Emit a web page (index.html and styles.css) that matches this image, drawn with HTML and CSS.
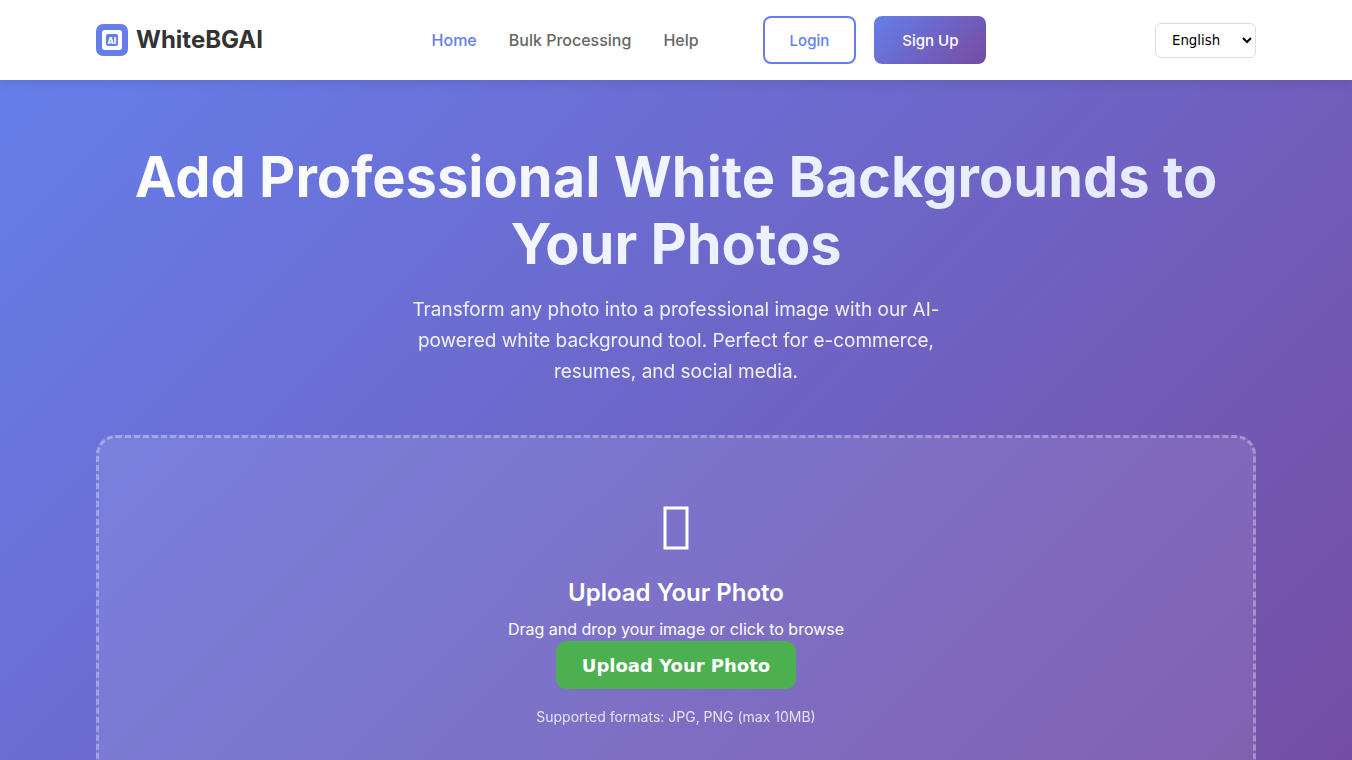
FILE: index.html
```html
<!DOCTYPE html>
<html lang="en">
<head>
  <meta charset="UTF-8">
  <meta name="viewport" content="width=device-width, initial-scale=1.0">
  <title>WhiteBGAI</title>
  <link rel="stylesheet" href="styles.css">
</head>
<body>
  <header class="header">
    <div class="container header-inner">
      <a href="#" class="logo">
        <svg class="logo-icon" width="32" height="32" viewBox="0 0 32 32" aria-hidden="true">
          <rect width="32" height="32" rx="7" fill="#667eea"/>
          <rect x="6" y="6" width="20" height="20" rx="3" fill="#fff"/>
          <rect x="10" y="10" width="12" height="12" rx="2" fill="#667eea"/>
          <text class="logo-mark" x="16" y="20" text-anchor="middle">AI</text>
        </svg>
        <span>WhiteBGAI</span>
      </a>
      <nav class="nav">
        <div class="nav-links">
          <a href="#" class="nav-link active">Home</a>
          <a href="#" class="nav-link">Bulk Processing</a>
          <a href="#" class="nav-link">Help</a>
        </div>
        <div class="nav-auth">
          <button type="button" class="btn btn-login">Login</button>
          <button type="button" class="btn btn-signup">Sign Up</button>
        </div>
      </nav>
      <select class="language" aria-label="Language">
        <option selected>English</option>
        <option>Español</option>
        <option>Français</option>
      </select>
    </div>
  </header>

  <main class="hero">
    <div class="container">
      <h1 class="hero-title">Add Professional White Backgrounds to Your Photos</h1>
      <p class="hero-text">Transform any photo into a professional image with our AI-powered white background tool. Perfect for e-commerce, resumes, and social media.</p>

      <section class="upload">
        <svg class="upload-icon" width="26" height="44" viewBox="0 0 26 44" aria-hidden="true">
          <rect x="2" y="2" width="22" height="40" fill="none" stroke="#fff" stroke-width="3"/>
        </svg>
        <h2 class="upload-title">Upload Your Photo</h2>
        <p class="upload-text">Drag and drop your image or click to browse</p>
        <button type="button" class="upload-btn">Upload Your Photo</button>
        <p class="upload-formats">Supported formats: JPG, PNG (max 10MB)</p>
      </section>
    </div>
  </main>
</body>
</html>
```

FILE: styles.css
```css
* {
  margin: 0;
  padding: 0;
  box-sizing: border-box;
}

body {
  font-family: Inter, "Liberation Sans", sans-serif;
  font-size: 16px;
  line-height: 24px;
  color: #333;
}

a {
  text-decoration: none;
}

.container {
  max-width: 1200px;
  margin: 0 auto;
  padding: 0 20px;
}

/* header */
.header {
  position: sticky;
  top: 0;
  z-index: 10;
  background: #fff;
  box-shadow: 0 2px 10px rgba(0, 0, 0, 0.1);
}

.header-inner {
  display: flex;
  align-items: center;
  justify-content: space-between;
  padding-top: 16px;
  padding-bottom: 16px;
}

.logo {
  display: flex;
  align-items: center;
  gap: 8px;
  font-size: 24px;
  font-weight: 700;
  color: #333;
}

.logo-mark {
  font-family: "DejaVu Sans", sans-serif;
  font-size: 8px;
  font-weight: 700;
  fill: #fff;
}

.nav {
  display: flex;
  align-items: center;
  gap: 64px;
}

.nav-links {
  display: flex;
  gap: 32px;
}

.nav-link {
  font-weight: 500;
  color: #666;
}

.nav-link.active {
  color: #667eea;
}

.nav-auth {
  display: flex;
  gap: 18px;
}

.btn {
  height: 48px;
  border-radius: 8px;
  font-family: inherit;
  font-size: 15px;
  font-weight: 500;
  cursor: pointer;
}

.btn-login {
  padding: 0 25px;
  border: 2px solid #667eea;
  background: #fff;
  color: #667eea;
}

.btn-signup {
  padding: 0 28px;
  border: none;
  background: linear-gradient(135deg, #667eea 0%, #764ba2 100%);
  color: #fff;
}

.language {
  padding: 8px 12px;
  border: 1px solid #ddd;
  border-radius: 6px;
  background: #fff;
  color: #000;
  font-family: "DejaVu Sans", sans-serif;
}

/* hero */
.hero {
  padding: 64px 0;
  background: linear-gradient(135deg, #667eea 0%, #764ba2 100%);
  color: #fff;
  text-align: center;
}

.hero-title {
  margin-bottom: 16px;
  font-size: 56px;
  font-weight: 700;
  line-height: 67px;
  background: linear-gradient(135deg, #fff 0%, #e0e7ff 100%);
  -webkit-background-clip: text;
  background-clip: text;
  color: transparent;
}

.hero-text {
  max-width: 600px;
  margin: 0 auto 48px;
  font-size: 19px;
  line-height: 31px;
  opacity: 0.9;
}

.upload {
  display: flex;
  flex-direction: column;
  align-items: center;
  padding: 68px 48px 48px;
  border: 3px dashed rgba(255, 255, 255, 0.3);
  border-radius: 20px;
  background: rgba(255, 255, 255, 0.1);
}

.upload-icon {
  margin-bottom: 24px;
}

.upload-title {
  margin-bottom: 5px;
  font-size: 24px;
  font-weight: 600;
  line-height: 38px;
}

.upload-btn {
  height: 48px;
  padding: 0 26px;
  border: none;
  border-radius: 10px;
  background: #4caf50;
  color: #fff;
  font-family: "DejaVu Sans", sans-serif;
  font-size: 18px;
  font-weight: 700;
  cursor: pointer;
}

.upload-formats {
  margin-top: 16px;
  font-size: 14px;
  line-height: 24px;
  opacity: 0.8;
}
```
